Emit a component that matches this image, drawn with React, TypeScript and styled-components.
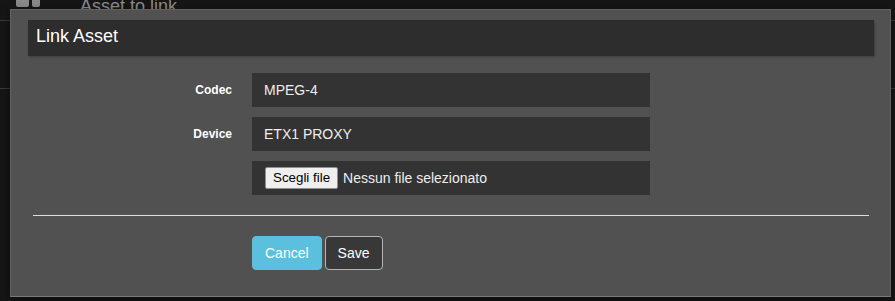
import React from "react";
import styled, { createGlobalStyle } from "styled-components";

const Global = createGlobalStyle`
  html, body { margin: 0; padding: 0; background: #161616; }
  body { font-family: "Liberation Sans", Arial, sans-serif; }
  * { box-sizing: border-box; }
`;

const Page = styled.div`
  position: relative;
  width: 895px;
  height: 301px;
  overflow: hidden;
  background: #161616;
`;

const TopBar = styled.div`
  display: flex;
  align-items: flex-end;
  gap: 40px;
  height: 21px;
  padding: 0 0 13px 16px;
  border-bottom: 1px solid #3c3c3c;
`;

const AppIcon = styled.div`
  display: flex;
  gap: 3px;
  margin-top: -20px;
  height: 27px;
  span {
    display: block;
    width: 13px;
    height: 27px;
    background: #8a8a8a;
    border-radius: 2px;
  }
  span + span { width: 8px; }
`;

const PageTitle = styled.div`
  color: #8c8c8c;
  font-size: 18px;
  line-height: 20px;
  margin-bottom: -9px;
`;

const Row = styled.div`
  height: 68px;
  border-bottom: 1px solid #3a3a3a;
`;

const Modal = styled.div`
  position: absolute;
  top: 9px;
  left: 10px;
  width: 881px;
  height: 288px;
  background: #515151;
  border: 1px solid #626262;
  border-bottom-color: #7a7a7a;
  padding: 10px 16px 0 17px;
  box-shadow: 0 3px 9px rgba(0, 0, 0, 0.5);
  display: flex;
  flex-direction: column;
`;

const Header = styled.div`
  height: 36px;
  background: #2d2d2d;
  padding: 6px 8px 0 8px;
  color: #ffffff;
  font-size: 18px;
  line-height: 20px;
  box-shadow: 1px 1px 2px rgba(0, 0, 0, 0.25);
`;

const Form = styled.div`
  margin-top: 17px;
  display: flex;
  flex-direction: column;
  gap: 10px;
`;

const FormRow = styled.div`
  display: grid;
  grid-template-columns: 204px 398px;
  column-gap: 20px;
  align-items: center;
`;

const Label = styled.label`
  text-align: right;
  color: #ffffff;
  font-size: 12px;
  font-weight: bold;
`;

const Field = styled.div`
  grid-column: 2;
  height: 34px;
  background: #333333;
  color: #eeeeee;
  font-size: 14px;
  line-height: 20px;
  padding: 7px 12px;
  display: flex;
  align-items: center;
  gap: 5px;
`;

const FileButton = styled.span`
  display: inline-block;
  background: #efefef;
  color: #000;
  border: 1px solid #8f8f8f;
  border-radius: 2px;
  font-size: 13.33px;
  line-height: 16px;
  padding: 2px 7px;
  margin-left: 1px;
  height: 22px;
`;

const Divider = styled.hr`
  margin: 20px 5px 0 5px;
  border: 0;
  border-top: 1px solid #dddddd;
  height: 0;
`;

const Actions = styled.div`
  margin-top: 20px;
  padding-left: 224px;
  display: flex;
  gap: 3px;
`;

const Button = styled.button<{ $variant: "info" | "dark" }>`
  font-family: "Liberation Sans", Arial, sans-serif;
  font-size: 14px;
  line-height: 20px;
  padding: 6px 12px;
  border-radius: 4px;
  color: #ffffff;
  cursor: pointer;
  background: ${(p) => (p.$variant === "info" ? "#5bc0de" : "#383838")};
  border: 1px solid ${(p) => (p.$variant === "info" ? "#5bc0de" : "#b5b5b5")};
`;

export default function App() {
  return (
    <>
      <Global />
      <Page>
        <TopBar>
          <AppIcon>
            <span />
            <span />
          </AppIcon>
          <PageTitle>Asset to link</PageTitle>
        </TopBar>
        <Row />
        <Modal>
          <Header>Link Asset</Header>
          <Form>
            <FormRow>
              <Label>Codec</Label>
              <Field>MPEG-4</Field>
            </FormRow>
            <FormRow>
              <Label>Device</Label>
              <Field>ETX1 PROXY</Field>
            </FormRow>
            <FormRow>
              <Field>
                <FileButton>Scegli file</FileButton>
                <span>Nessun file selezionato</span>
              </Field>
            </FormRow>
          </Form>
          <Divider />
          <Actions>
            <Button $variant="info">Cancel</Button>
            <Button $variant="dark">Save</Button>
          </Actions>
        </Modal>
      </Page>
    </>
  );
}
